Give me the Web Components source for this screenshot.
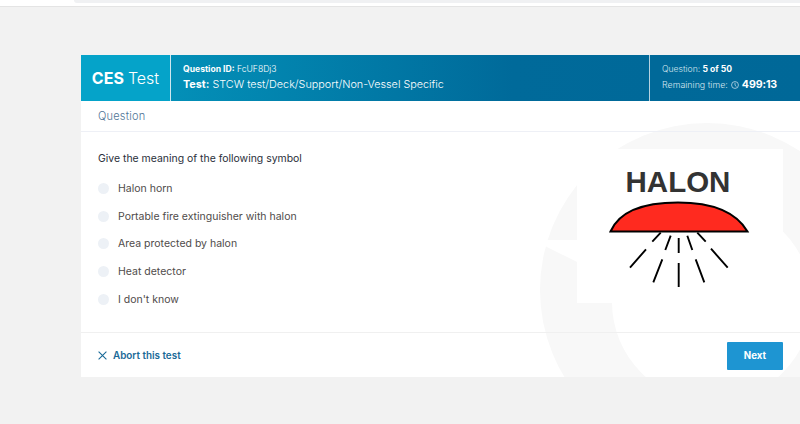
<!DOCTYPE html>
<html>
<head>
<meta charset="utf-8">
<style>
  html, body { margin: 0; padding: 0; height: 100%; overflow: hidden; background: #f2f2f2; }
</style>
</head>
<body>
<top-strip></top-strip>
<exam-page>
  <exam-header slot="header"></exam-header>
  <question-panel slot="body">
    <answer-option>Halon horn</answer-option>
    <answer-option>Portable fire extinguisher with halon</answer-option>
    <answer-option>Area protected by halon</answer-option>
    <answer-option>Heat detector</answer-option>
    <answer-option>I don't know</answer-option>
  </question-panel>
  <exam-footer slot="footer"></exam-footer>
</exam-page>

<script>
const HEAD_FONT = 'Inter, "Open Sans", sans-serif';

class TopStrip extends HTMLElement {
  constructor() {
    super();
    this.attachShadow({ mode: "open" }).innerHTML = `
      <style>
        :host { display: block; height: 6px; background: #fff; border-bottom: 1px solid #e4e4e4; }
        div { margin-left: 74px; height: 3px; background: #f0f1f3; border-radius: 0 0 0 6px; }
      </style>
      <div></div>`;
  }
}

class ExamPage extends HTMLElement {
  constructor() {
    super();
    this.attachShadow({ mode: "open" }).innerHTML = `
      <style>
        :host { display: block; margin: 48px 0 0 81px; }
        .card { position: relative; background: #fff; overflow: hidden; display: flex; flex-direction: column; }
        /* faint logo behind the question, viewBox is in page coordinates */
        .mark { position: absolute; left: 0; top: 0; width: 719px; height: 322px; }
        .label { position: relative; box-sizing: border-box; height: 31px; padding: 0 0 1px 17px; display: flex; align-items: center;
          font: 300 11px ${HEAD_FONT}; color: #4f7596; letter-spacing: .2px; border-bottom: 1px solid #eef0f6; }
        ::slotted(*) { position: relative; }
      </style>
      <div class="card">
        <svg class="mark" viewBox="81 55 719 322">
          <path fill="#f8f8f8" fill-rule="evenodd" d="M540 290A167 167 0 1 1 874 290A167 167 0 1 1 540 290ZM612 302A100 100 0 1 0 812 302A100 100 0 1 0 612 302Z"/>
          <path fill="#fff" d="M530 240H600V274L577 262L545 246L530 238Z"/>
        </svg>
        <slot name="header"></slot>
        <div class="label">Question</div>
        <slot name="body"></slot>
        <slot name="footer"></slot>
      </div>`;
  }
}

class ExamHeader extends HTMLElement {
  constructor() {
    super();
    this.attachShadow({ mode: "open" }).innerHTML = `
      <style>
        :host { display: flex; height: 46px; color: #fff; font-family: ${HEAD_FONT};
          background: linear-gradient(90deg, #0b9ec4 0, #0390b8 12%, #006a9a 60%, #006898 100%); }
        * { box-sizing: border-box; }
        .brand { width: 90px; flex: none; background: #05a3c9; border-right: 1px solid #cfe7ef;
          display: flex; align-items: center; justify-content: center; font-size: 16px; font-weight: 300; white-space: nowrap; }
        .brand b { font-weight: 700; margin-right: 4px; }
        .info { flex: 1; padding: 8px 0 0 12px; font-weight: 300; }
        .side { width: 151px; flex: none; border-left: 1px solid #b5d2e0; padding: 8px 0 0 12px; color: #d5e6ef; font-weight: 300; }
        .row1 { font-size: 8.6px; line-height: 13px; }
        .row2 { font-size: 10.8px; line-height: 17px; }
        .side .row2 { font-size: 8.9px; display: flex; align-items: center; gap: 3px; }
        b { font-weight: 700; color: #fff; }
        .time { font-size: 10.6px; font-weight: 700; color: #fff; letter-spacing: -.1px; }
        svg { width: 8px; height: 8px; }
      </style>
      <div class="brand"><b>CES</b>Test</div>
      <div class="info">
        <div class="row1"><b>Question ID:</b> FcUF8Dj3</div>
        <div class="row2"><b>Test:</b> STCW test/Deck/Support/Non-Vessel Specific</div>
      </div>
      <div class="side">
        <div class="row1">Question: <b>5 of 50</b></div>
        <div class="row2">Remaining time:
          <svg viewBox="0 0 10 10" fill="none" stroke="#d5e6ef" stroke-width=".9"><circle cx="5" cy="5" r="4.3"/><path d="M5 2.2V5.3L6.8 7"/></svg>
          <span class="time">499:13</span></div>
      </div>`;
  }
}

class QuestionPanel extends HTMLElement {
  constructor() {
    super();
    this.attachShadow({ mode: "open" }).innerHTML = `
      <style>
        :host { display: flex; height: 200px; justify-content: space-between; font-family: Inter, sans-serif; }
        .left { padding: 20px 0 0 17px; }
        .q { font-size: 10.45px; line-height: 14px; color: #2a2f3a; margin-bottom: 9px; }
        .pic { margin: 17px 17px 0 0; width: 206px; height: 154px; background: #fff; }
        svg { display: block; }
        text { font: 700 29.5px "Liberation Sans", sans-serif; fill: #333; }
      </style>
      <div class="left">
        <div class="q">Give the meaning of the following symbol</div>
        <slot></slot>
      </div>
      <div class="pic">
        <svg width="206" height="154" viewBox="0 0 206 154">
          <text x="101" y="43" text-anchor="middle">HALON</text>
          <path d="M33.5 82.5C42 63 66 53.5 101 53.5S159 63 170.5 82.5Z" fill="#ff2a1f" stroke="#000" stroke-width="2"/>
          <g stroke="#000" stroke-width="1.9" fill="none">
            <path d="M101.7 89V104M101.7 114V138"/>
            <path d="M93.7 86.7L88.3 101M85.3 110.3L76.3 133.3"/>
            <path d="M110.3 86.7L115.3 101M118.7 110.3L127.3 133.3"/>
            <path d="M83.7 83.7L75.3 92.7M69 100.3L53 118.7"/>
            <path d="M120.3 83.7L128.7 92.7M134 99.7L150.7 118.7"/>
          </g>
        </svg>
      </div>`;
  }
}

class AnswerOption extends HTMLElement {
  constructor() {
    super();
    this.attachShadow({ mode: "open" }).innerHTML = `
      <style>
        :host { display: flex; align-items: center; height: 27.6px; gap: 9px;
          font: 10.5px Inter, sans-serif; color: #4f4b4a; }
        i { width: 11px; height: 11px; border-radius: 50%; background: #edf1f6; }
      </style>
      <i></i><slot></slot>`;
  }
}

class ExamFooter extends HTMLElement {
  constructor() {
    super();
    this.attachShadow({ mode: "open" }).innerHTML = `
      <style>
        :host { box-sizing: border-box; display: flex; height: 45px; align-items: center; justify-content: space-between;
          padding: 0 17px; border-top: 1px solid #f0f0f0; font-family: ${HEAD_FONT}; }
        .abort { display: flex; align-items: center; gap: 6px; font-size: 9.9px; font-weight: 600; color: #1a6a98; }
        svg { width: 9px; height: 9px; }
        button { width: 56px; height: 28px; border: 0; border-radius: 1px; background: #1e95d2; color: #fff;
          font: 700 9.7px ${HEAD_FONT}; margin-top: 1px; }
      </style>
      <div class="abort">
        <svg viewBox="0 0 9 9" stroke="#1a6a98" stroke-width="1.1"><path d="M.6.6L8.4 8.4M8.4.6L.6 8.4"/></svg>
        Abort this test
      </div>
      <button>Next</button>`;
  }
}

customElements.define("top-strip", TopStrip);
customElements.define("exam-page", ExamPage);
customElements.define("exam-header", ExamHeader);
customElements.define("question-panel", QuestionPanel);
customElements.define("answer-option", AnswerOption);
customElements.define("exam-footer", ExamFooter);
</script>
</body>
</html>
